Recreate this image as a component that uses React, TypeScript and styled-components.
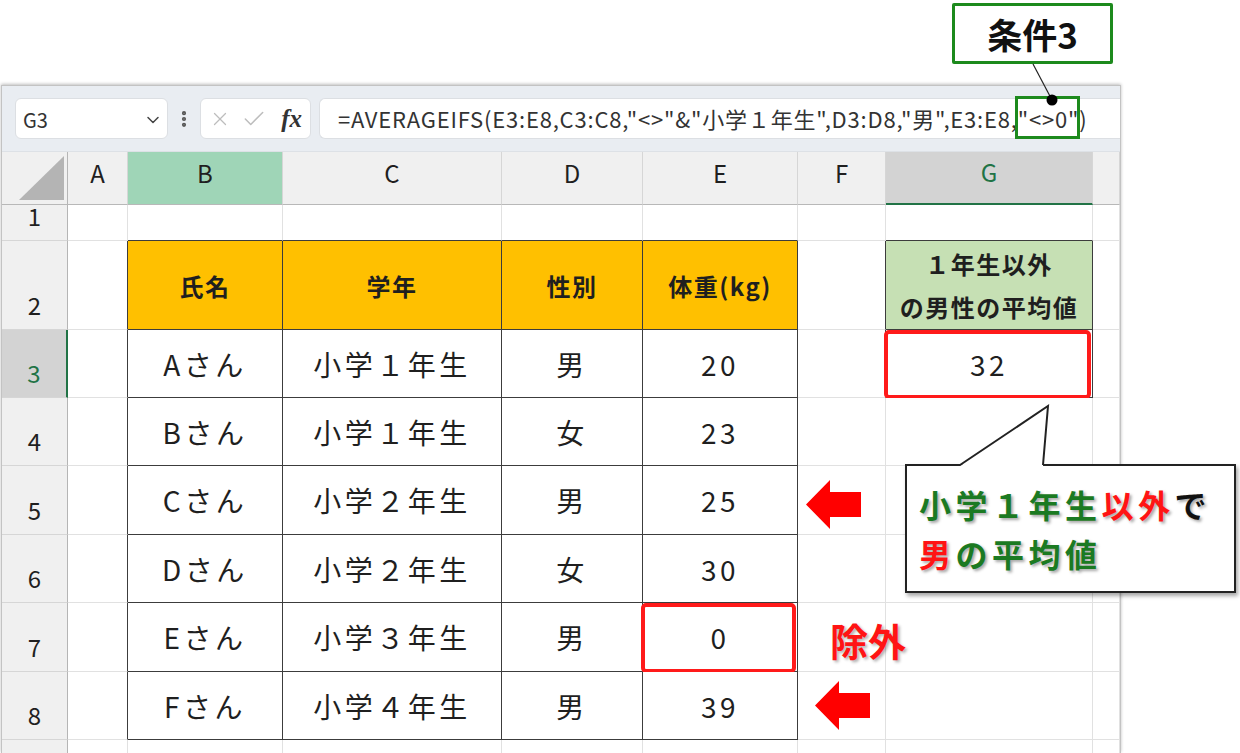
import React from 'react';
import styled, { createGlobalStyle } from 'styled-components';
import { X, Check, ChevronDown, EllipsisVertical } from 'lucide-react';

const GlobalStyle = createGlobalStyle`
  body {
    margin: 0;
    background: #fff;
    font-family: "Noto Sans CJK JP", "Noto Sans", sans-serif;
  }
`;

const Page = styled.div`
  position: relative;
  width: 1240px;
  height: 753px;
  padding: 85px 0 0 1px;
  box-sizing: border-box;
  overflow: hidden;
`;

const Window = styled.div`
  width: 1120px;
  height: 668px;
  box-sizing: border-box;
  border: 1px solid #c3c3c3;
  border-bottom: none;
  box-shadow: 0 -1px 3px rgba(0, 0, 0, 0.25);
  overflow: hidden;
  background: #fff;
`;

const FormulaBar = styled.div`
  height: 66px;
  box-sizing: border-box;
  display: flex;
  align-items: center;
  padding-left: 13px;
  background: #e9edf2;
  border-bottom: 1px solid #dde1e6;
`;

const NameBox = styled.div`
  width: 153px;
  height: 41px;
  box-sizing: border-box;
  display: flex;
  align-items: center;
  justify-content: space-between;
  padding: 2px 4px 0 7px;
  background: #fff;
  border: 1px solid #dcdfe3;
  border-radius: 6px;
  font-size: 20px;
  color: #333;
`;

const Dots = styled.div`
  width: 32px;
  display: flex;
  justify-content: center;
  color: #555;
`;

const FxBox = styled.div`
  width: 111px;
  height: 41px;
  box-sizing: border-box;
  display: flex;
  align-items: center;
  gap: 10px;
  padding: 0 8px 0 8px;
  background: #fff;
  border: 1px solid #dcdfe3;
  border-radius: 6px;
  color: #bdbdbd;
`;

const FxLabel = styled.span`
  margin-left: auto;
  font-family: "Liberation Serif", "DejaVu Serif", serif;
  font-style: italic;
  font-weight: 700;
  font-size: 25px;
  color: #333;
`;

const FormulaInput = styled.div`
  flex: 1;
  height: 41px;
  margin-left: 8px;
  box-sizing: border-box;
  display: flex;
  align-items: center;
  padding: 0 0 1px 18px;
  background: #fff;
  border: 1px solid #dcdfe3;
  border-right: none;
  border-radius: 6px 0 0 6px;
  font-size: 22px;
  letter-spacing: 0.8px;
  color: #333;
  white-space: nowrap;
`;

const Mark = styled.span`
  position: relative;
  &::after {
    content: '';
    position: absolute;
    left: -3px;
    right: -1px;
    top: 50%;
    height: 43px;
    margin-top: -22px;
    box-sizing: border-box;
    border: 3px solid #1d8a1d;
  }
`;

const Sheet = styled.div`
  display: grid;
  grid-template-columns: 66px 60px 155px 219px 141px 155px 88px 207px 1fr;
  grid-template-rows: 53px 36px 89px 68px 68px 69px 68px 69px 68px 68px;
`;

const Corner = styled.div`
  position: relative;
  background: #f0f0f0;
  border-right: 1px solid #b5b5b5;
  border-bottom: 1px solid #b8b8b8;
  &::after {
    content: '';
    position: absolute;
    right: 3px;
    bottom: 4px;
    width: 45px;
    height: 44px;
    background: #b4b4b4;
    clip-path: polygon(100% 0, 100% 100%, 0 100%);
  }
`;

const ColHead = styled.div<{ $state: 'normal' | 'hl' | 'active' }>`
  box-sizing: border-box;
  display: flex;
  align-items: center;
  justify-content: center;
  padding-bottom: 12px;
  font-size: 24px;
  background: ${p => (p.$state === 'hl' ? '#9fd5b7' : p.$state === 'active' ? '#d3d3d3' : '#f0f0f0')};
  color: ${p => (p.$state === 'active' ? '#217346' : '#1f1f1f')};
  border-right: 1px solid #d6d6d6;
  border-bottom: ${p => (p.$state === 'active' ? '2px solid #217346' : '1px solid #b8b8b8')};
`;

const RowHead = styled.div<{ $active?: boolean }>`
  box-sizing: border-box;
  display: flex;
  align-items: flex-end;
  justify-content: center;
  padding-bottom: 8px;
  line-height: 32px;
  font-size: 24px;
  background: ${p => (p.$active ? '#d3d3d3' : '#f0f0f0')};
  color: ${p => (p.$active ? '#217346' : '#1f1f1f')};
  border-right: ${p => (p.$active ? '2px solid #217346' : '1px solid #b5b5b5')};
  border-bottom: 1px solid #d6d6d6;
`;

const Cell = styled.div<{ $right: string; $bottom: string; $fill?: string; $bold?: boolean }>`
  position: relative;
  box-sizing: border-box;
  display: flex;
  align-items: center;
  justify-content: center;
  text-align: center;
  white-space: pre-line;
  background: ${p => p.$fill ?? '#fff'};
  border-right: 1px solid ${p => p.$right};
  border-bottom: 1px solid ${p => p.$bottom};
  color: #1f1f1f;
  font-size: ${p => (p.$bold ? '24px' : '28px')};
  font-weight: ${p => (p.$bold ? 700 : 400)};
  letter-spacing: ${p => (p.$bold ? '1.5px' : '3.5px')};
  line-height: ${p => (p.$bold ? '43px' : '34px')};
`;

const Flag = styled.span`
  position: absolute;
  top: 0;
  left: -2px;
  right: 1px;
  bottom: -2px;
  border: 4px solid #ff1a1a;
  border-radius: 5px;
`;

const TagBox = styled.div`
  position: absolute;
  left: 952px;
  top: 3px;
  width: 161px;
  height: 61px;
  box-sizing: border-box;
  display: flex;
  align-items: center;
  justify-content: center;
  background: #fff;
  border: 3px solid #1d8a1d;
  border-radius: 2px;
  font-size: 35px;
  font-weight: 700;
  color: #111;
`;

const Overlay = styled.svg`
  position: absolute;
  left: 0;
  top: 0;
  pointer-events: none;
`;

const Callout = styled.div`
  position: absolute;
  left: 905px;
  top: 464px;
  width: 331px;
  height: 129px;
  box-sizing: border-box;
  display: flex;
  flex-direction: column;
  justify-content: center;
  padding-left: 12px;
  background: #fff;
  border: 2px solid #222;
  box-shadow: 2px 3px 4px rgba(0, 0, 0, 0.35);
  font-size: 32px;
  font-weight: 700;
  letter-spacing: 4.5px;
  line-height: 49px;
  white-space: nowrap;
  text-shadow: 2px 2px 3px rgba(0, 0, 0, 0.35);
`;

const Ink = styled.span<{ $c: 'g' | 'r' | 'k' }>`
  color: ${p => (p.$c === 'g' ? '#1b7a22' : p.$c === 'r' ? '#ff1414' : '#111')};
`;

const Excluded = styled.div`
  position: absolute;
  left: 830px;
  top: 614px;
  font-size: 38px;
  font-weight: 700;
  line-height: 52px;
  color: #ff1414;
  text-shadow: 2px 2px 3px rgba(0, 0, 0, 0.3);
`;

type Pos = { x: number; y: number };

function Arrow({ x, y }: Pos) {
  return (
    <Overlay width={56} height={50} style={{ left: x, top: y }} viewBox="0 0 56 50">
      <polygon points="0,24.5 24,0 24,12 55,12 55,37 24,37 24,49" fill="#ff0000" />
    </Overlay>
  );
}

const cells: Record<number, Record<number, string>> = {
  2: { 1: '氏名', 2: '学年', 3: '性別', 4: '体重(kg)', 6: '１年生以外\nの男性の平均値' },
  3: { 1: 'Aさん', 2: '小学１年生', 3: '男', 4: '20', 6: '32' },
  4: { 1: 'Bさん', 2: '小学１年生', 3: '女', 4: '23' },
  5: { 1: 'Cさん', 2: '小学２年生', 3: '男', 4: '25' },
  6: { 1: 'Dさん', 2: '小学２年生', 3: '女', 4: '30' },
  7: { 1: 'Eさん', 2: '小学３年生', 3: '男', 4: '0' },
  8: { 1: 'Fさん', 2: '小学４年生', 3: '男', 4: '39' },
};

const COLS = ['A', 'B', 'C', 'D', 'E', 'F', 'G', 'H'];
const ROWS = [1, 2, 3, 4, 5, 6, 7, 8, 9];
const DARK = '#3c3c3c';
const GRID = '#e1e1e1';

const boxed = (r: number, c: number) =>
  (r >= 2 && r <= 8 && c >= 1 && c <= 4) || (c === 6 && (r === 2 || r === 3));

const fillOf = (r: number, c: number) => {
  if (r === 2 && c >= 1 && c <= 4) return '#ffc000';
  if (r === 2 && c === 6) return '#c6e0b4';
  return undefined;
};

const flagged = (r: number, c: number) => (r === 3 && c === 6) || (r === 7 && c === 4);

export default function App() {
  return (
    <Page>
      <GlobalStyle />
      <Window>
        <FormulaBar>
          <NameBox>
            <span>G3</span>
            <ChevronDown size={20} color="#444" strokeWidth={1.8} />
          </NameBox>
          <Dots>
            <EllipsisVertical size={20} strokeWidth={3} />
          </Dots>
          <FxBox>
            <X size={22} strokeWidth={1.4} />
            <Check size={26} strokeWidth={1.4} />
            <FxLabel>fx</FxLabel>
          </FxBox>
          <FormulaInput>
            =AVERAGEIFS(E3:E8,C3:C8,"&lt;&gt;"&amp;"小学１年生",D3:D8,"男",E3:E8,
            <Mark>"&lt;&gt;0"</Mark>)
          </FormulaInput>
        </FormulaBar>
        <Sheet>
          <Corner />
          {COLS.map((col, c) => (
            <ColHead key={col} $state={c === 1 ? 'hl' : c === 6 ? 'active' : 'normal'}>
              {c < 7 ? col : ''}
            </ColHead>
          ))}
          {ROWS.map(r => (
            <React.Fragment key={r}>
              {/* row 9 lies below the visible edge, so its number is not shown */}
              <RowHead $active={r === 3}>{r < 9 ? r : ''}</RowHead>
              {COLS.map((col, c) => (
                <Cell
                  key={col}
                  $right={boxed(r, c) || boxed(r, c + 1) ? DARK : GRID}
                  $bottom={boxed(r, c) || boxed(r + 1, c) ? DARK : GRID}
                  $fill={fillOf(r, c)}
                  $bold={r === 2}
                >
                  {cells[r]?.[c] ?? ''}
                  {flagged(r, c) && <Flag />}
                </Cell>
              ))}
            </React.Fragment>
          ))}
        </Sheet>
      </Window>

      <TagBox>条件3</TagBox>
      <Overlay width={1240} height={753}>
        <line x1={1033} y1={64} x2={1052} y2={100} stroke="#222" strokeWidth={1.2} />
        <circle cx={1052} cy={100} r={5.5} fill="#000" />
      </Overlay>

      <Callout>
        <div>
          <Ink $c="g">小学１年生</Ink>
          <Ink $c="r">以外</Ink>
          <Ink $c="k">で</Ink>
        </div>
        <div>
          <Ink $c="r">男</Ink>
          <Ink $c="g">の平均値</Ink>
        </div>
      </Callout>
      <Overlay width={1240} height={753}>
        <polygon points="960,466 1048,406 1043,466" fill="#fff" />
        <polyline points="960,465 1048,406 1043,465" fill="none" stroke="#222" strokeWidth={2} />
      </Overlay>

      <Arrow x={806} y={480} />
      <Arrow x={815} y={681} />
      <Excluded>除外</Excluded>
    </Page>
  );
}
